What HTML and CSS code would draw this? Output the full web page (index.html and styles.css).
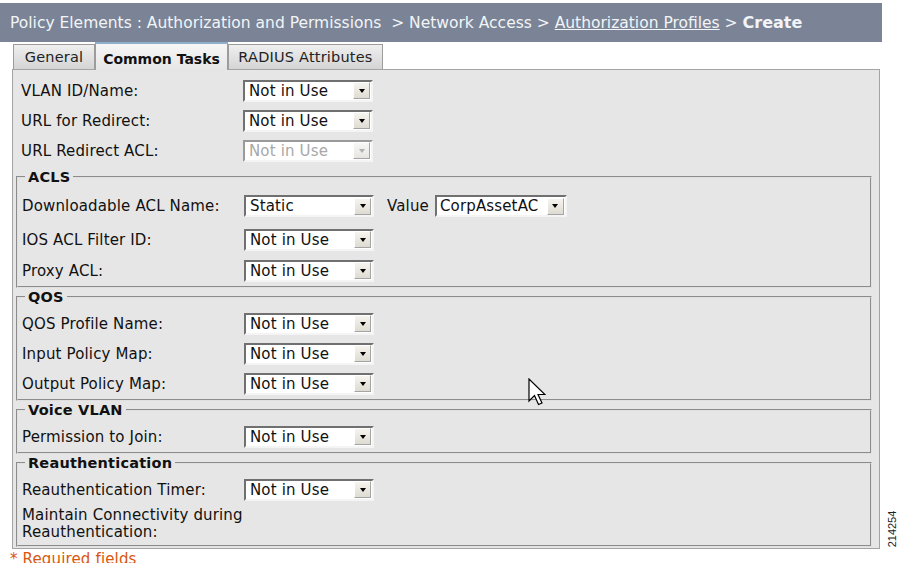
FILE: index.html
```html
<!DOCTYPE html>
<html>
<head>
<meta charset="utf-8">
<title>Authorization Profiles - Create</title>
<link rel="stylesheet" href="styles.css">
</head>
<body>
<div class="page">
  <div class="crumbs">Policy Elements : Authorization and Permissions &nbsp;&gt; Network Access &gt;&nbsp;<span class="link">Authorization Profiles</span>&nbsp;&gt;&nbsp;<span class="current">Create</span></div>
  <div class="tabs">
    <div class="tab t-general">General</div>
    <div class="tab t-common active">Common Tasks</div>
    <div class="tab t-radius">RADIUS Attributes</div>
  </div>
  <div class="panel">
    <div class="row top"><label>VLAN ID/Name:</label><div class="sel"><span>Not in Use</span><span class="btn"></span></div></div>
    <div class="row top"><label>URL for Redirect:</label><div class="sel"><span>Not in Use</span><span class="btn"></span></div></div>
    <div class="row top"><label>URL Redirect ACL:</label><div class="sel disabled"><span>Not in Use</span><span class="btn"></span></div></div>

    <fieldset class="group first">
      <legend>ACLS</legend>
      <div class="row r-tall"><label>Downloadable ACL Name:</label><div class="sel"><span>Static</span><span class="btn"></span></div><span class="value-label">Value</span><div class="sel sel-value"><span>CorpAssetAC</span><span class="btn"></span></div></div>
      <div class="row r-mid"><label>IOS ACL Filter ID:</label><div class="sel"><span>Not in Use</span><span class="btn"></span></div></div>
      <div class="row"><label>Proxy ACL:</label><div class="sel"><span>Not in Use</span><span class="btn"></span></div></div>
    </fieldset>

    <fieldset class="group">
      <legend>QOS</legend>
      <div class="row"><label>QOS Profile Name:</label><div class="sel"><span>Not in Use</span><span class="btn"></span></div></div>
      <div class="row"><label>Input Policy Map:</label><div class="sel"><span>Not in Use</span><span class="btn"></span></div></div>
      <div class="row"><label>Output Policy Map:</label><div class="sel"><span>Not in Use</span><span class="btn"></span></div></div>
    </fieldset>

    <fieldset class="group">
      <legend>Voice VLAN</legend>
      <div class="row"><label>Permission to Join:</label><div class="sel"><span>Not in Use</span><span class="btn"></span></div></div>
    </fieldset>

    <fieldset class="group">
      <legend>Reauthentication</legend>
      <div class="row"><label>Reauthentication Timer:</label><div class="sel"><span>Not in Use</span><span class="btn"></span></div></div>
      <div class="maint">Maintain Connectivity during<br>Reauthentication:</div>
    </fieldset>
  </div>
  <div class="req"><span class="star">*</span> Required fields</div>
</div>
<svg class="cursor" width="18" height="28" viewBox="0 0 18 28">
  <path d="M1 1 L1 23 L6.5 17.5 L10.5 26.5 L14 25 L10 16.5 L17 16.5 Z" fill="#fff" stroke="#000" stroke-width="1.2" stroke-linejoin="miter"/>
</svg>
<div class="figno">214254</div>
</body>
</html>
```

FILE: styles.css
```css
* { box-sizing: border-box; }
html, body { margin: 0; padding: 0; background: #fff; }
body {
  font-family: "DejaVu Sans", Verdana, sans-serif;
  font-size: 15px;
  letter-spacing: 0.15px;
  color: #111;
  overflow: hidden;
  height: 563px;
}
.page { width: 882px; padding-top: 3px; }

.crumbs {
  height: 39px;
  background: #7a8496;
  color: #f2f4f7;
  font-size: 15.5px;
  letter-spacing: 0;
  display: flex;
  align-items: center;
  padding-left: 10px;
  white-space: nowrap;
}
.crumbs .link { text-decoration: underline; }
.crumbs .current { font-weight: bold; font-size: 16px; }

.tabs {
  display: flex;
  align-items: flex-end;
  height: 27px;
  padding-left: 13px;
}
.tab {
  height: 25px;
  display: flex;
  align-items: center;
  justify-content: center;
  background: linear-gradient(#efefef, #d4d4d4);
  border: 1px solid #9c9c9c;
  border-bottom: none;
  font-size: 14.5px;
  letter-spacing: 0.2px;
  color: #222;
  white-space: nowrap;
}
.t-general { width: 82px; }
.t-common { width: 133px; }
.t-radius { width: 155px; }
.tab.active {
  height: 28px;
  margin-bottom: -1px;
  padding-top: 3px;
  background: linear-gradient(#f6f6f6, #e6e6e6);
  border-top: 2px solid #8eb0cd;
  font-weight: bold;
  font-size: 14px;
  letter-spacing: 0;
  color: #111;
  position: relative;
  z-index: 1;
}

.panel {
  margin-left: 12px;
  width: 868px;
  background: #e6e6e6;
  border: 1px solid #a4a4a4;
  padding: 5px 7px 1px 3px;
}

.row {
  display: flex;
  align-items: center;
  height: 30px;
  padding-top: 1px;
}
.row.top { padding-left: 5px; }
.row.r-tall { height: 35px; }
.row.r-mid { height: 32px; }
.row label { width: 222px; flex: none; white-space: nowrap; }

.sel {
  width: 130px;
  height: 22px;
  flex: none;
  display: flex;
  align-items: center;
  justify-content: space-between;
  background: #fff;
  border: 2px solid;
  border-color: #707070 #f4f4f4 #f4f4f4 #707070;
  padding-left: 4px;
  padding-right: 1px;
  color: #111;
  white-space: nowrap;
  overflow: hidden;
}
.sel span:first-child { overflow: hidden; }
.sel-value { width: 132px; padding-left: 3px; }
.sel .btn {
  width: 17px;
  height: 17px;
  flex: none;
  background: linear-gradient(#f6f4ee, #dedbd2);
  border: 1px solid;
  border-color: #fff #a4a4a4 #a4a4a4 #fff;
  display: flex;
  align-items: center;
  justify-content: center;
}
.sel .btn::after {
  content: "";
  border-left: 3.5px solid transparent;
  border-right: 3.5px solid transparent;
  border-top: 4px solid #000;
}
.sel.disabled { color: #a8a8a8; border-color: #9a9a9a #f4f4f4 #f4f4f4 #9a9a9a; }
.sel.disabled .btn { background: linear-gradient(#f7f7f5, #e6e5e0); }
.sel.disabled .btn::after { border-top-color: #b0b0b0; }

.value-label { margin: 0 6px 0 13px; }

.group {
  margin: 0;
  padding: 2px 4px 1px;
  border: 2px groove #e0e0e0;
  min-width: 0;
}
.group.first { margin-top: 3px; }
.group legend {
  font-weight: bold;
  font-size: 14.5px;
  letter-spacing: 0.2px;
  line-height: 18px;
  padding: 0 3px;
  margin-left: 3px;
}
.maint {
  line-height: 17px;
  margin: 3px 0 3px;
}

.req {
  padding-left: 10px;
  padding-top: 2px;
  line-height: 17px;
  color: #d9560f;
}

.cursor {
  position: absolute;
  left: 528px;
  top: 378px;
}
.figno {
  position: absolute;
  left: 872px;
  top: 523px;
  width: 40px;
  font-family: "Liberation Sans", Arial, sans-serif;
  font-size: 11px;
  letter-spacing: 0;
  line-height: 12px;
  color: #222;
  transform: rotate(-90deg);
  text-align: center;
}
```
